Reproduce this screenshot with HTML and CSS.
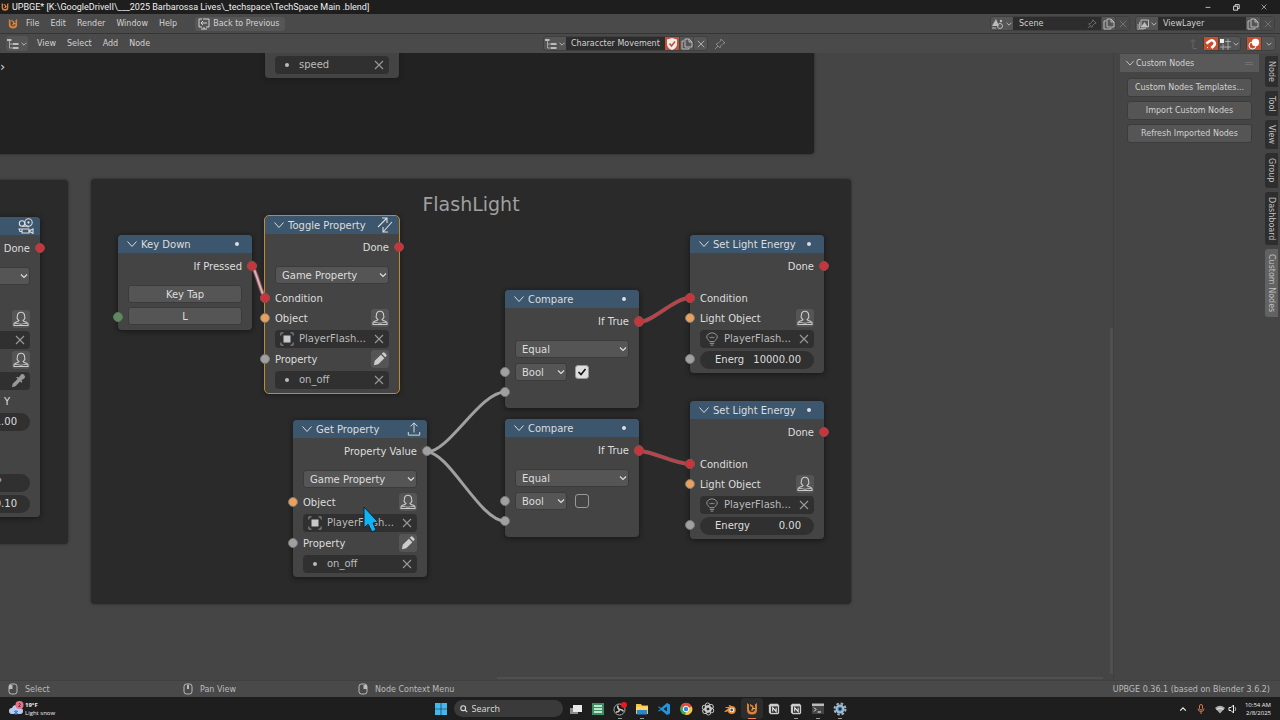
FILE: index.html
```html
<!DOCTYPE html>
<html lang="en">
<head>
<meta charset="utf-8">
<title>UPBGE</title>
<link rel="stylesheet" href="styles.css">
</head>
<body>
<svg class="defs" aria-hidden="true">
  <symbol id="chev" viewBox="0 0 10 10"><path d="M2 3.500 5 6.500 8 3.500" fill="none" stroke="currentColor" stroke-width="1.200"/></symbol>
  <symbol id="fold" viewBox="0 0 12 12"><path d="M1.500 3.500 6 8.500 10.500 3.500" fill="none" stroke="currentColor" stroke-width="1"/></symbol>
  <symbol id="x" viewBox="0 0 10 10"><path d="M1 1 9 9M9 1 1 9" fill="none" stroke="currentColor" stroke-width="1.100"/></symbol>
  <symbol id="tree" viewBox="0 0 12 12"><path d="M0 1h4.500v2H0zM6 5h5.500v2H6zM6 9h5.500v2H6z" fill="currentColor"/><path d="M2.500 3v7H6M2.500 6H6" fill="none" stroke="currentColor" stroke-width=".8"/></symbol>
  <symbol id="user" viewBox="0 0 16 16"><path d="M6 9.500C4.300 8.500 3.600 6.500 4.400 5.500 4.200 2.700 5.700 1.200 8 1.200s3.800 1.500 3.600 4.300c.8 1 .1 3-1.600 4 0 1.500 5 1 5 3.500v1.500H1V13c0-2.500 5-2 5-3.500z" fill="none" stroke="currentColor" stroke-width="1.100"/><path d="M2 12.500h3.500c1 1 4 1 5 0H14" fill="none" stroke="currentColor" stroke-width=".8"/></symbol>
  <symbol id="pencil" viewBox="0 0 16 16"><path d="M1 15l1-5 7-7 4 4-7 7zM10 2l1.500-1.400Q12.500 0 13.500 1L15 2.500q1 1 .4 2L14 6z" fill="currentColor"/></symbol>
  <symbol id="object" viewBox="0 0 16 16"><path d="M4 4h8v8H4z" fill="#c8c8c8"/><path d="M1 4V1h3M12 1h3v3M15 12v3h-3M4 15H1v-3" fill="none" stroke="#999" stroke-width="1.100"/></symbol>
  <symbol id="bulb" viewBox="0 0 16 16"><path d="M5.500 11C5 9.500 2 8.500 2 5.700 2 3 5 1 8 1s6 2 6 4.700C14 8.500 11 9.500 10.500 11zM5.500 13h5M6.500 15h3M5 5.500 6.500 7 8 5.500 9.500 7 11 5.500" fill="none" stroke="currentColor" stroke-width="1.100"/></symbol>
  <symbol id="dropper" viewBox="0 0 16 16"><path d="M1 15l1-4 6-6 3 3-6 6zM7 3l2 1 2-3q2-2 4 0t0 4l-3 2 1 2-1 1-6-6z" fill="currentColor"/></symbol>
  <symbol id="camera" viewBox="0 0 16 16"><g fill="none" stroke="currentColor" stroke-width="1.100"><circle cx="4" cy="5.500" r="2.700"/><circle cx="10.500" cy="4.500" r="3.700"/><circle cx="10.500" cy="4.500" r=".6"/><path d="M4 8.200h6v1.300M4 11h7v4H4zM11 13l4-2v4.500zM1 11h3v2.500H2z"/></g></symbol>
  <symbol id="toggle" viewBox="0 0 16 16"><path d="M1 10 10 1M5 1h5v5M15 5 6 15M6 10v5h5" fill="none" stroke="currentColor" stroke-width="1.100"/></symbol>
  <symbol id="export" viewBox="0 0 16 16"><path d="M8 12V1M4 5l4-4 4 4M1.500 11.500V15h13v-3.500" fill="none" stroke="currentColor" stroke-width="1.100"/></symbol>
  <symbol id="pin" viewBox="0 0 12 12"><path d="M7 1l4 4-2 .5L6.500 8 6 10 2 6l2-.5L6.500 3zM4 8 1 11" fill="none" stroke="currentColor"/></symbol>
  <symbol id="copy" viewBox="0 0 12 12"><path d="M4 1h4l3 3v5H4zM8 1v3h3M3 3H1v8h7v-1" fill="none" stroke="currentColor"/></symbol>
  <symbol id="upbge" viewBox="0 0 12 12"><path d="M1 0l2 1.500v5.200Q3.500 9 6 9t3-2.300V1.500L11 0v7q0 4.500-5 4.500T1 7z" fill="#d98236"/><path d="M4 1l3.500 2v4L6 8 4.500 7 6 6V4L4 3z" fill="#d98236"/><path d="M6.500 5.500h2.500" stroke="#f0b070"/></symbol>
  <symbol id="notion" viewBox="0 0 14 14"><path d="M1 2.500 2.500 1h9L13 3v9l-1.500 1H3L1 11z" fill="#ccc"/><path d="M3.500 4h8v7.500h-8z" fill="#333"/><path d="M5.500 10V5.500l4 4.500V5.500" fill="none" stroke="#eee" stroke-width="1.200"/></symbol>
</svg>

<div class="app">
  <header class="titlebar">
    <svg class="i8"><use href="#upbge"/></svg>
    <span class="title">UPBGE* [K:\GoogleDriveII\___2025 Barbarossa Lives\_techspace\TechSpace Main .blend]</span>
    <div class="winbtns">
      <button aria-label="Minimize"><svg viewBox="0 0 10 10" class="i8"><path d="M2 5.500h6" stroke="#ddd"/></svg></button>
      <button aria-label="Restore"><svg viewBox="0 0 10 10" class="i8"><path d="M2 4h5v5H2zM4 4V2h5v5H7" fill="none" stroke="#ddd" stroke-width="1.200"/></svg></button>
      <button aria-label="Close"><svg class="i6"><use href="#x"/></svg></button>
    </div>
  </header>

  <nav class="bar topbar">
    <svg class="i10 logo"><use href="#upbge"/></svg>
    <button class="menu">File</button><button class="menu">Edit</button><button class="menu">Render</button><button class="menu">Window</button><button class="menu">Help</button>
    <button class="back"><svg class="i12" viewBox="0 0 12 12"><path d="M4 1H1v8h3M5 1h6v8H8M3 5h6M5 3 3 5l2 2M6 9v2M3 11h6" fill="none" stroke="currentColor"/></svg>Back to Previous</button>
    <div class="group scene">
      <button class="seg wide" aria-label="Browse scene"><svg class="i12" viewBox="0 0 12 12"><path d="M4 1 7 8H0z" fill="currentColor"/><circle cx="8" cy="8" r="2.500" fill="none" stroke="currentColor"/><circle cx="9" cy="3" r="1.200" fill="currentColor"/><path d="M0 10h4" stroke="currentColor"/></svg><svg class="i8"><use href="#chev"/></svg></button>
      <input class="name" aria-label="Scene name" value="Scene">
      <button class="seg dark dim" aria-label="Pin scene"><svg class="i10"><use href="#pin"/></svg></button>
      <button class="seg" aria-label="New scene"><svg class="i12"><use href="#copy"/></svg></button>
      <button class="seg plain dim" aria-label="Delete scene"><svg class="i8"><use href="#x"/></svg></button>
    </div>
    <div class="group">
      <button class="seg wide" aria-label="Browse view layer"><svg class="i12" viewBox="0 0 12 12"><path d="M4 2h7.500v7H4z" fill="none" stroke="currentColor"/><path d="M4 9l3.500-5L11 9z" fill="currentColor"/><path d="M2.500 4v6.500H9M1 6v6h6" fill="none" stroke="currentColor" stroke-width=".8"/></svg><svg class="i8"><use href="#chev"/></svg></button>
      <input class="name layer" aria-label="View layer name" value="ViewLayer">
      <button class="seg" aria-label="New view layer"><svg class="i12"><use href="#copy"/></svg></button>
      <button class="seg plain dim" aria-label="Delete view layer"><svg class="i8"><use href="#x"/></svg></button>
    </div>
  </nav>

  <nav class="bar editbar">
    <div class="left">
      <button class="seg wide round" aria-label="Editor type"><svg class="i12"><use href="#tree"/></svg><svg class="i8"><use href="#chev"/></svg></button>
      <button class="menu">View</button><button class="menu">Select</button><button class="menu">Add</button><button class="menu">Node</button>
    </div>
    <div class="mid">
      <div class="group">
        <button class="seg wide" aria-label="Browse node tree"><svg class="i12"><use href="#tree"/></svg><svg class="i8"><use href="#chev"/></svg></button>
        <input class="name tree" aria-label="Node tree name" value="Characcter Movement">
        <button class="seg on" aria-label="Fake user"><svg class="i12" viewBox="0 0 12 12"><path d="M6 0l5 1.500V6q0 4-5 6Q1 10 1 6V1.500z" fill="#eee"/><path d="M3.500 5.500 5.500 8 9 3.500" fill="none" stroke="#c14f35" stroke-width="1.500"/></svg></button>
        <button class="seg" aria-label="Duplicate"><svg class="i12"><use href="#copy"/></svg></button>
        <button class="seg" aria-label="Unlink"><svg class="i8"><use href="#x"/></svg></button>
      </div>
      <svg class="i12 pin"><use href="#pin"/></svg>
    </div>
    <div class="right">
      <svg class="i10 parent" viewBox="0 0 10 10"><path d="M2.500 3 5 .5 7.500 3M5 1v8.500h4" fill="none" stroke="currentColor"/></svg>
      <div class="group">
        <button class="seg on" aria-label="Snap"><svg class="i12" viewBox="0 0 12 12"><path d="M1.500 5.500 4 3.500q3-2.500 5 0T8.500 8L6.500 10" fill="none" stroke="#fff" stroke-width="2.500"/><path d="M2 9l1 1" stroke="#fff"/></svg></button>
        <button class="seg wide" aria-label="Snap target"><svg class="i12" viewBox="0 0 12 12"><path d="M4 6v6M9 1v11M6 3.500h6M1 9h11" stroke="currentColor" fill="none" stroke-width=".8"/><path d="M1 1h4v4H1z" fill="#eee"/></svg><svg class="i8"><use href="#chev"/></svg></button>
      </div>
      <div class="group">
        <button class="seg on" aria-label="Overlays"><svg class="i12" viewBox="0 0 12 12"><circle cx="7.500" cy="4.500" r="3.700" fill="#fff"/><circle cx="4.500" cy="7.500" r="3.500" fill="none" stroke="#fff"/></svg></button>
        <button class="seg" aria-label="Overlay options"><svg class="i8"><use href="#chev"/></svg></button>
      </div>
    </div>
  </nav>

  <main class="editor">
    <section class="canvas">
      <div class="frame frame-top"></div>
      <div class="frame frame-left"></div>
      <div class="frame frame-flash"><h2>FlashLight</h2></div>
      <span class="expand">›</span>

      <article class="node n-speed"><div class="body">
        <div class="row field"><div class="prop"><i class="dot"></i><input aria-label="Property name" value="speed"><button aria-label="Clear"><svg class="i10"><use href="#x"/></svg></button></div></div>
      </div></article>

      <article class="node n-left">
        <header><svg class="i16"><use href="#camera"/></svg></header>
        <div class="body">
          <div class="row out">Done<i class="socket red o"></i></div>
          <div class="pick"><select aria-label="Mode"><option></option></select><svg class="i10"><use href="#chev"/></svg></div>
          <div class="row"></div>
          <div class="row"><button class="mini" aria-label="Owner"><svg class="i16"><use href="#user"/></svg></button></div>
          <div class="row field"><div class="prop"><input aria-label="Object" value=""><button aria-label="Clear"><svg class="i10"><use href="#x"/></svg></button></div></div>
          <div class="row"><button class="mini" aria-label="Owner"><svg class="i16"><use href="#user"/></svg></button></div>
          <div class="row field"><div class="prop"><input aria-label="Object" value=""><button aria-label="Pick"><svg class="i14"><use href="#dropper"/></svg></button></div></div>
          <div class="row axis">Y</div>
          <div class="row field"><div class="num"><input aria-label="Y" value="1.00"></div></div>
          <div class="row"></div><div class="row"></div>
          <div class="row field"><div class="num"><input aria-label="Angle" class="deg" value="0°"></div></div>
          <div class="row field"><div class="num"><input aria-label="Factor" value="0.10"></div></div>
        </div>
      </article>

      <article class="node n-key">
        <header><svg class="i12"><use href="#fold"/></svg><h3>Key Down</h3><i class="dot"></i></header>
        <div class="body">
          <div class="row out">If Pressed<i class="socket red o"></i></div>
          <button class="btn">Key Tap</button>
          <div class="hold"><i class="socket green"></i><button class="btn last">L</button></div>
        </div>
      </article>

      <article class="node n-toggle selected">
        <header><svg class="i12"><use href="#fold"/></svg><h3>Toggle Property</h3><svg class="i16"><use href="#toggle"/></svg></header>
        <div class="body">
          <div class="row out">Done<i class="socket red o"></i></div>
          <div class="pick"><select aria-label="Property type"><option>Game Property</option></select><svg class="i10"><use href="#chev"/></svg></div>
          <div class="row"><i class="socket red"></i>Condition</div>
          <div class="row"><i class="socket orange"></i>Object<button class="mini" aria-label="Owner"><svg class="i16"><use href="#user"/></svg></button></div>
          <div class="row field"><div class="prop"><svg class="i14"><use href="#object"/></svg><input aria-label="Object" value="PlayerFlash..."><button aria-label="Clear"><svg class="i10"><use href="#x"/></svg></button></div></div>
          <div class="row"><i class="socket gray"></i>Property<button class="mini" aria-label="Edit"><svg class="i14"><use href="#pencil"/></svg></button></div>
          <div class="row field"><div class="prop"><i class="dot"></i><input aria-label="Property" value="on_off"><button aria-label="Clear"><svg class="i10"><use href="#x"/></svg></button></div></div>
        </div>
      </article>

      <article class="node n-get">
        <header><svg class="i12"><use href="#fold"/></svg><h3>Get Property</h3><svg class="i14"><use href="#export"/></svg></header>
        <div class="body">
          <div class="row out">Property Value<i class="socket gray o"></i></div>
          <div class="pick"><select aria-label="Property type"><option>Game Property</option></select><svg class="i10"><use href="#chev"/></svg></div>
          <div class="row"><i class="socket orange"></i>Object<button class="mini" aria-label="Owner"><svg class="i16"><use href="#user"/></svg></button></div>
          <div class="row field"><div class="prop"><svg class="i14"><use href="#object"/></svg><input aria-label="Object" value="PlayerFlash..."><button aria-label="Clear"><svg class="i10"><use href="#x"/></svg></button></div></div>
          <div class="row"><i class="socket gray"></i>Property<button class="mini" aria-label="Edit"><svg class="i14"><use href="#pencil"/></svg></button></div>
          <div class="row field"><div class="prop"><i class="dot"></i><input aria-label="Property" value="on_off"><button aria-label="Clear"><svg class="i10"><use href="#x"/></svg></button></div></div>
        </div>
      </article>

      <article class="node n-cmp1">
        <header><svg class="i12"><use href="#fold"/></svg><h3>Compare</h3><i class="dot"></i></header>
        <div class="body tail">
          <div class="row out">If True<i class="socket red o"></i></div>
          <div class="pick"><select aria-label="Operator"><option>Equal</option></select><svg class="i10"><use href="#chev"/></svg></div>
          <div class="row"><i class="socket gray"></i><div class="pick small"><select aria-label="Type"><option>Bool</option></select><svg class="i10"><use href="#chev"/></svg></div><input type="checkbox" aria-label="Value" checked></div>
          <div class="row"><i class="socket gray"></i></div>
        </div>
      </article>

      <article class="node n-cmp2">
        <header><svg class="i12"><use href="#fold"/></svg><h3>Compare</h3><i class="dot"></i></header>
        <div class="body tail">
          <div class="row out">If True<i class="socket red o"></i></div>
          <div class="pick"><select aria-label="Operator"><option>Equal</option></select><svg class="i10"><use href="#chev"/></svg></div>
          <div class="row"><i class="socket gray"></i><div class="pick small"><select aria-label="Type"><option>Bool</option></select><svg class="i10"><use href="#chev"/></svg></div><input type="checkbox" aria-label="Value"></div>
          <div class="row"><i class="socket gray"></i></div>
        </div>
      </article>

      <article class="node n-light1">
        <header><svg class="i12"><use href="#fold"/></svg><h3>Set Light Energy</h3><i class="dot"></i></header>
        <div class="body">
          <div class="row out gap">Done<i class="socket red o"></i></div>
          <div class="row"><i class="socket red"></i>Condition</div>
          <div class="row"><i class="socket orange"></i>Light Object<button class="mini" aria-label="Owner"><svg class="i16"><use href="#user"/></svg></button></div>
          <div class="row field"><div class="prop"><svg class="i14"><use href="#bulb"/></svg><input aria-label="Light" value="PlayerFlash..."><button aria-label="Clear"><svg class="i10"><use href="#x"/></svg></button></div></div>
          <div class="row field"><i class="socket gray"></i><div class="num"><label for="e1">Energ</label><input id="e1" value="10000.00"></div></div>
        </div>
      </article>

      <article class="node n-light2">
        <header><svg class="i12"><use href="#fold"/></svg><h3>Set Light Energy</h3><i class="dot"></i></header>
        <div class="body">
          <div class="row out gap">Done<i class="socket red o"></i></div>
          <div class="row"><i class="socket red"></i>Condition</div>
          <div class="row"><i class="socket orange"></i>Light Object<button class="mini" aria-label="Owner"><svg class="i16"><use href="#user"/></svg></button></div>
          <div class="row field"><div class="prop"><svg class="i14"><use href="#bulb"/></svg><input aria-label="Light" value="PlayerFlash..."><button aria-label="Clear"><svg class="i10"><use href="#x"/></svg></button></div></div>
          <div class="row field"><i class="socket gray"></i><div class="num"><label for="e2">Energy</label><input id="e2" value="0.00"></div></div>
        </div>
      </article>

      <svg class="links" aria-hidden="true">
        <g fill="none">
          <path d="M252 213C256 217 261 240 265 245" stroke="#8f5558" stroke-width="4"/>
          <path d="M252 213C256 217 261 240 265 245" stroke="#d8b4b6" stroke-width="2"/>
          <path d="M427 399C449 399 480 339 505 339M427 399C449 399 480 468 505 468" stroke="#a0a0a0" stroke-width="3"/>
          <path d="M639 269C653 269 674 245 690 245M639 398C653 398 674 411 690 411" stroke="#8c5557" stroke-width="4"/>
          <path d="M639 269C653 269 674 245 690 245M639 398C653 398 674 411 690 411" stroke="#c24048" stroke-width="2"/>
        </g>
        <g fill="#c8363c" stroke="#8e4a4d"><circle cx="252" cy="213" r="4.500"/><circle cx="265" cy="245" r="4.500"/><circle cx="639" cy="269" r="4.500"/><circle cx="690" cy="245" r="4.500"/><circle cx="639" cy="398" r="4.500"/><circle cx="690" cy="411" r="4.500"/></g>
        <path d="M364 454v21l4-4 4 8 4-2-3-7 5-1z" fill="#10b4f4" stroke="#123" stroke-width="1"/>
      </svg>
      <i class="vscroll"></i><i class="hscroll"></i>
    </section>

    <aside class="sidebar">
      <section class="panel">
        <h2><svg class="i10"><use href="#fold"/></svg>Custom Nodes<span class="grip"></span></h2>
        <button>Custom Nodes Templates...</button>
        <button>Import Custom Nodes</button>
        <button>Refresh Imported Nodes</button>
      </section>
      <nav class="tabs"><button>Node</button><button>Tool</button><button>View</button><button>Group</button><button>Dashboard</button><button class="active">Custom Nodes</button></nav>
    </aside>
  </main>

  <footer class="status">
    <span><svg class="mouse" viewBox="0 0 10 12"><rect x="1" y="1" width="8" height="10" rx="2.500" fill="none" stroke="currentColor"/><path d="M1 2h3.500v4H1z" fill="currentColor"/></svg>Select</span>
    <span><svg class="mouse" viewBox="0 0 10 12"><rect x="1" y="1" width="8" height="10" rx="2.500" fill="none" stroke="currentColor"/><path d="M4 2h2v4H4z" fill="currentColor"/></svg>Pan View</span>
    <span><svg class="mouse" viewBox="0 0 10 12"><rect x="1" y="1" width="8" height="10" rx="2.500" fill="none" stroke="currentColor"/><path d="M5.500 2H9v4H5.500z" fill="currentColor"/></svg>Node Context Menu</span>
    <span class="version">UPBGE 0.36.1 (based on Blender 3.6.2)</span>
  </footer>

  <footer class="taskbar">
    <div class="weather">
      <svg class="i16" viewBox="0 0 16 16"><path d="M4 13q-3 0-3-3t3-3q1-3 4-3t4 3q3 0 3 3t-3 3z" fill="#b9cdf2"/><path d="M8 9v5M6 10l4 3M10 10l-4 3" stroke="#2b77d9"/><circle cx="11.500" cy="4" r="4" fill="#e8748a"/><path d="M10.500 3q1-1 2 0 0 1-2 2.500h2" fill="none" stroke="#5b1c2a" stroke-width=".8"/></svg>
      <p><b>19°F</b><br>Light snow</p>
    </div>
    <div class="apps">
      <button aria-label="Start"><svg class="i12" viewBox="0 0 12 12"><path d="M0 0h5.700v5.700H0zM6.300 0H12v5.700H6.300zM0 6.300h5.700V12H0zM6.300 6.300H12V12H6.300z" fill="#43b8f0"/></svg></button>
      <label class="search"><svg class="i8" viewBox="0 0 10 10"><circle cx="4" cy="4" r="3" fill="none" stroke="#ddd" stroke-width="1.400"/><path d="M6.500 6.500 9 9" stroke="#ddd" stroke-width="1.400"/></svg><input aria-label="Search" placeholder="Search"></label>
      <button aria-label="Task view"><svg class="i14" viewBox="0 0 14 14"><path d="M1 6h8v6H1z" fill="#8b8b8b"/><path d="M4 3h9v7H4z" fill="#e8e8e8"/></svg></button>
      <button aria-label="Sheets"><svg class="i14" viewBox="0 0 14 14"><path d="M1 1h12v12H1z" fill="#3c8f63"/><path d="M3 4h8M3 7h8M3 10h8" stroke="#e9fff2" stroke-width="1.500"/></svg></button>
      <button class="run" aria-label="OBS"><svg class="i14" viewBox="0 0 14 14"><circle cx="6.500" cy="7.500" r="5.500" fill="#1a1a1a" stroke="#aaa"/><path d="M6.500 7.500Q4 6 5 3.500M6.500 7.500Q9.500 7 10.500 9.500M6.500 7.500Q6 10.500 3 10" fill="none" stroke="#ccc" stroke-width="1.500"/><circle cx="11" cy="3" r="3" fill="#f01818"/></svg></button>
      <button class="run" aria-label="Files"><svg class="i14" viewBox="0 0 14 14"><path d="M1 2h5l1 1.500h6V12H1z" fill="#f5c242"/><path d="M2 8h10v4.500H2z" fill="#2a86cf"/><path d="M1 4.500h12V8H1z" fill="#ffd766"/></svg></button>
      <button aria-label="VS Code"><svg class="i14" viewBox="0 0 14 14"><path d="M10 1l3 1.500v9L10 13 4 8 2 9.500 1 9 3.500 7 1 5l1-.5L4 6zM10 4.500 6.500 7 10 9.500z" fill="#2196dc"/></svg></button>
      <button aria-label="Chrome"><svg class="i14" viewBox="0 0 14 14"><circle cx="7" cy="7" r="6" fill="#3fa655"/><path d="M7 7 1.800 4A6 6 0 0 1 12.800 5z" fill="#e24a3b"/><path d="M7 7l5.800-2.500A6 6 0 0 1 6.500 13z" fill="#f7c93e"/><circle cx="7" cy="7" r="2.800" fill="#3d7ee8" stroke="#fff"/></svg></button>
      <button aria-label="ChatGPT"><svg class="i14" viewBox="0 0 14 14"><g fill="none" stroke="#ccc" stroke-width=".9"><rect x="4.300" y="1" width="4.500" height="9" rx="2.200"/><rect x="4.300" y="1" width="4.500" height="9" rx="2.200" transform="rotate(60 7 7)"/><rect x="4.300" y="1" width="4.500" height="9" rx="2.200" transform="rotate(120 7 7)"/><rect x="4.300" y="1" width="4.500" height="9" rx="2.200" transform="rotate(180 7 7)"/><rect x="4.300" y="1" width="4.500" height="9" rx="2.200" transform="rotate(240 7 7)"/><rect x="4.300" y="1" width="4.500" height="9" rx="2.200" transform="rotate(300 7 7)"/></g></svg></button>
      <button aria-label="Blender"><svg class="i14" viewBox="0 0 14 14"><path d="M1 9.500 6 6H2.500V5H7L5.500 3.500 7 3l4.500 3.500L3 10z" fill="#ee8b2d"/><circle cx="8.700" cy="8" r="4" fill="#ee8b2d"/><circle cx="8.700" cy="8" r="2.300" fill="#fff"/><circle cx="8.700" cy="8" r="1.400" fill="#245b9b"/></svg></button>
      <button class="current" aria-label="UPBGE"><svg class="i12"><use href="#upbge"/></svg></button>
      <button aria-label="Notion"><svg class="i12"><use href="#notion"/></svg></button>
      <button class="run" aria-label="Notion Calendar"><svg class="i12"><use href="#notion"/></svg></button>
      <button class="run" aria-label="Terminal"><svg class="i14" viewBox="0 0 14 14"><path d="M1 2h12v10H1z" fill="#444"/><path d="M1 1.500h12V4H1z" fill="#bbb"/><path d="M3 5.500l2 2-2 2M6.500 10H10" fill="none" stroke="#eee"/></svg></button>
      <button class="run" aria-label="Settings"><svg class="i14" viewBox="0 0 14 14"><circle cx="7" cy="7" r="5.500" fill="none" stroke="#9fb3c4" stroke-width="2" stroke-dasharray="2.500 1.820"/><circle cx="7" cy="7" r="4.500" fill="#a9bccb"/><circle cx="7" cy="7" r="2" fill="#1d2a36" stroke="#2d8be0"/></svg></button>
    </div>
    <div class="tray">
      <svg class="i8" viewBox="0 0 10 10"><path d="M1.500 7 5 3.500 8.500 7" fill="none" stroke="#eee" stroke-width="1.500"/></svg>
      <svg class="i10 mic" viewBox="0 0 10 10"><rect x="3.500" y=".5" width="3" height="5.500" rx="1.500" fill="none" stroke="#d3764f"/><path d="M2 4.500q0 3 3 3t3-3M5 7.500V10" fill="none" stroke="#d3764f"/></svg>
      <svg class="i10" viewBox="0 0 10 10"><path d="M5 9.500 0 4q5-4.500 10 0z" fill="#aaa"/><path d="M1.500 5.500q3.500-3 7 0" stroke="#e8e8e8" fill="none"/></svg>
      <svg class="i10" viewBox="0 0 10 10"><path d="M1 3.500h2L5.500 1v8L3 6.500H1z" fill="none" stroke="#eee"/><path d="M7 3q1.500 2 0 4" fill="none" stroke="#aaa"/></svg>
      <p class="clock">10:54 AM<br>2/8/2025</p>
    </div>
  </footer>
</div>
</body>
</html>
```

FILE: styles.css
```css
* { box-sizing: border-box; }
body { margin: 0; background: #1f1f1f; }
body, button, input, select { font-family: "DejaVu Sans", sans-serif; font-size: 8px; color: #d2d2d2; }
button { border: 0; padding: 0; background: none; display: flex; align-items: center; justify-content: center; }
input { border: 0; padding: 0; margin: 0; background: none; min-width: 0; outline: 0; }
h2, h3, p { margin: 0; font-weight: normal; }
svg { flex: none; display: block; }
.defs { position: absolute; width: 0; height: 0; }
.i6 { width: 6px; height: 6px; }
.i8 { width: 8px; height: 8px; }
.i10 { width: 10px; height: 10px; }
.i12 { width: 12px; height: 12px; }
.i14 { width: 14px; height: 14px; }
.i16 { width: 16px; height: 16px; }

.app { display: flex; flex-direction: column; height: 100vh; overflow: hidden; }

/* Window title */
.titlebar { display: flex; align-items: center; height: 14px; padding: 0 2px 0 1px; gap: 3px; background: #1e1e1e; }
.title { font: 9px/14px Roboto, sans-serif; color: #f0f0f0; white-space: nowrap; }
.winbtns { display: flex; margin-left: auto; }
.winbtns button { width: 28px; height: 14px; }

/* Tool bars */
.bar { display: flex; align-items: center; background: #4a4a4a; }
.topbar { height: 20px; border-bottom: 1px solid #353535; padding: 0 5px 0 8px; }
.editbar { display: grid; grid-template-columns: 1fr auto 1fr; height: 19px; padding: 0 4px 0 6px; }
.logo { margin-right: 3px; }
.menu { padding: 0 6px 0 5px; height: 16px; }
.back { height: 14px; padding: 0 5px 0 3px; margin-left: 12px; gap: 3px; border-radius: 3px; background: #565656; }
.group { display: flex; height: 15px; border: 1px solid #3f3f3f; border-radius: 3px; background: #555; }
.scene { margin-left: auto; margin-right: 5px; }
.seg { width: 14px; color: #bbb; }
.seg + .seg { border-left: 1px solid #444; }
.wide { width: 22px; gap: 1px; }
.round { height: 15px; border-radius: 3px; background: #555; margin-right: 4px; }
.dark { background: #2d2d2d; border: 0; width: 18px; }
.dim { color: #777; }
.plain { background: #4a4a4a; }
.on { background: #c5502f; }
.name { width: 70px; padding-left: 6px; background: #2d2d2d; }
.layer { width: 88px; padding-left: 5px; }
.tree { width: 99px; padding-left: 5px; }
.left, .mid, .right { display: flex; align-items: center; }
.mid { padding-right: 13px; }
.pin { margin-left: 6px; color: #888; }
.right { justify-content: flex-end; gap: 5px; }
.parent { color: #666; }

/* Node editor */
.editor { display: flex; flex: 1; min-height: 0; background: #454545; }
.canvas { position: relative; flex: 1; overflow: hidden; font-size: 10px; }
.canvas button, .canvas input, .canvas select { font-size: 10px; }
.frame { position: absolute; background: #2a2a2a; border-radius: 4px; box-shadow: 0 0 3px #252525; }
.frame-top { left: -8px; top: -8px; width: 822px; height: 109px; background: #222; }
.frame-left { left: -8px; top: 127px; width: 76px; height: 364px; }
.frame-flash { left: 91px; top: 126px; width: 760px; height: 425px; }
.frame h2 { padding-top: 14px; text-align: center; font-size: 19px; line-height: 22px; color: #a0a0a0; }
.expand { position: absolute; left: 0; top: 6px; font-size: 13px; line-height: 16px; }

.node { position: absolute; width: 134px; border-radius: 4px; background: #444; color: #ddd; box-shadow: 0 1px 4px 1px #1b1b1b; }
.selected { outline: 1px solid #c08a30; outline-offset: 0; }
.n-speed { left: 265px; top: 0; border-radius: 0 0 4px 4px; }
.n-speed .body { padding-top: 1px; }
.n-left { left: -94px; top: 164px; }
.n-key { left: 118px; top: 182px; }
.n-toggle { left: 265px; top: 163px; }
.n-get { left: 293px; top: 367px; }
.n-cmp1 { left: 505px; top: 237px; }
.n-cmp2 { left: 505px; top: 366px; }
.n-light1 { left: 690px; top: 182px; }
.n-light2 { left: 690px; top: 348px; }

.node header { display: flex; align-items: center; height: 18px; padding: 0 6px 0 8px; gap: 3px; border-radius: 4px 4px 0 0; background: #3c566e; }
.node h3 { flex: 1; font-size: 10px; white-space: nowrap; }
.n-left header { justify-content: flex-end; }
.dot { width: 4px; height: 4px; border-radius: 50%; background: #ddd; flex: none; }
header .dot { margin-right: 7px; }
.body { padding: 3px 10px; }
.tail { padding-bottom: 6px; }
.row { position: relative; display: flex; align-items: center; height: 20px; }
.field { height: 21px; }
.out { justify-content: flex-end; margin-bottom: 9px; }
.gap { margin-bottom: 12px; }
.axis { justify-content: flex-end; padding-right: 20px; }
.socket { position: absolute; left: -15px; top: 5px; width: 10px; height: 10px; border-radius: 50%; border: 1px solid #777; }
.socket.o { left: auto; right: -15px; }
.red { background: #c8363c; border-color: #8e4a4d; }
.orange { background: #e8a05c; }
.gray { background: #a0a0a0; }
.green { background: #5f8a60; border-color: #557857; }

.btn { width: 100%; height: 18px; margin-bottom: 4px; border: 1px solid #3b3b3b; border-radius: 3px; background: #555; color: #ddd; }
.last { margin-bottom: 2px; }
.hold { position: relative; }
.pick { position: relative; margin-bottom: 4px; }
.pick select { display: block; width: 100%; height: 18px; padding: 0 6px; border: 1px solid #3b3b3b; border-radius: 3px; background: #555; color: #ddd; appearance: none; }
.pick svg { position: absolute; right: 1px; top: 4px; pointer-events: none; }
.small { width: 52px; margin: 0 8px 0 0; }
input[type="checkbox"] { appearance: none; width: 14px; height: 14px; border: 1px solid #999; border-radius: 3px; }
input[type="checkbox"]:checked { background: #ddd url("data:image/svg+xml,%3Csvg xmlns='http://www.w3.org/2000/svg' viewBox='0 0 12 12'%3E%3Cpath d='M2.500 6 5 8.500 9.500 3' fill='none' stroke='%23111' stroke-width='1.600'/%3E%3C/svg%3E") center / 12px 12px; }
.mini { width: 18px; height: 18px; margin-left: auto; border-radius: 3px; background: #555; color: #ccc; }
.prop, .num { display: flex; align-items: center; width: 100%; height: 18px; background: #303030; border-radius: 4px; }
.prop { padding: 0 5px; gap: 5px; }
.prop .dot { margin: 0 5px; background: #bbb; }
.prop input, .num input { height: 16px; line-height: 16px; }
.prop input { flex: 1; color: #bbb; }
.prop svg, .prop button { color: #999; }
.num { padding: 0 13px 0 15px; border-radius: 9px; }
.num input { flex: 1; text-align: right; color: #ddd; }
.num .deg { padding-right: 15px; }
.links { position: absolute; inset: 0; width: 100%; height: 100%; pointer-events: none; }
.vscroll { position: absolute; right: 0; top: 275px; bottom: 6px; width: 3px; background: #505050; }
.hscroll { position: absolute; left: 497px; right: 10px; bottom: 1px; height: 2px; background: #505050; }

/* Side region */
.sidebar { display: flex; width: 167px; padding: 1px 2px 0 6px; justify-content: space-between; border-left: 1px solid #404040; }
.panel { display: flex; flex-direction: column; gap: 4px; width: 139px; }
.panel h2 { display: flex; align-items: center; gap: 1px; height: 18px; padding: 0 6px 0 5px; margin-bottom: 2px; font-size: 8px; background: #595959; }
.grip { width: 8px; height: 3px; margin-left: auto; border: solid #707070; border-width: 1px 0; }
.panel button { height: 19px; margin: 0 7px; border: 1px solid #3c3c3c; border-radius: 3px; background: #555; }
.tabs { display: flex; flex-direction: column; gap: 4px; padding-top: 2px; }
.tabs button { writing-mode: vertical-rl; width: 13px; padding: 5px 0; border-radius: 3px 0 0 3px; background: #2e2e2e; color: #c0c0c0; }
.tabs .active { background: #626262; }

/* Status bar */
.status { display: flex; align-items: center; height: 17px; padding: 0 10px 0 8px; background: #494949; border-top: 1px solid #404040; color: #bbb; }
.status span { display: flex; align-items: center; gap: 7px; width: 175px; }
.status .version { width: auto; margin-left: auto; }
.mouse { width: 10px; height: 12px; }

/* Desktop taskbar */
.taskbar { display: grid; grid-template-columns: 1fr auto 1fr; align-items: center; height: 23px; background: #1e1e1e; }
.weather, .apps, .tray { display: flex; align-items: center; }
.weather { padding-left: 8px; gap: 1px; }
.weather p, .clock { font: 6px/8px "Open Sans", sans-serif; color: #eee; }
.apps button { position: relative; width: 22px; height: 21px; border-radius: 3px; }
.search { display: flex; align-items: center; gap: 4px; width: 109px; height: 17px; margin: 0 2px; padding-left: 6px; border-radius: 9px; background: #3a3a3a; }
.search input { width: 80px; font: 9px "Open Sans", sans-serif; }
.search input::placeholder { color: #ddd; }
.run::after, .current::after { content: ""; position: absolute; bottom: 0; left: 9px; width: 4px; height: 1px; background: #999; }
.apps .current { background: #2c2c2c; }
.current::after { left: 7px; width: 8px; background: #e8865a; }
.tray { justify-content: flex-end; gap: 3px; padding-right: 9px; }
.mic { margin: 0 6px; }
.clock { text-align: right; margin-left: 4px; }
```
